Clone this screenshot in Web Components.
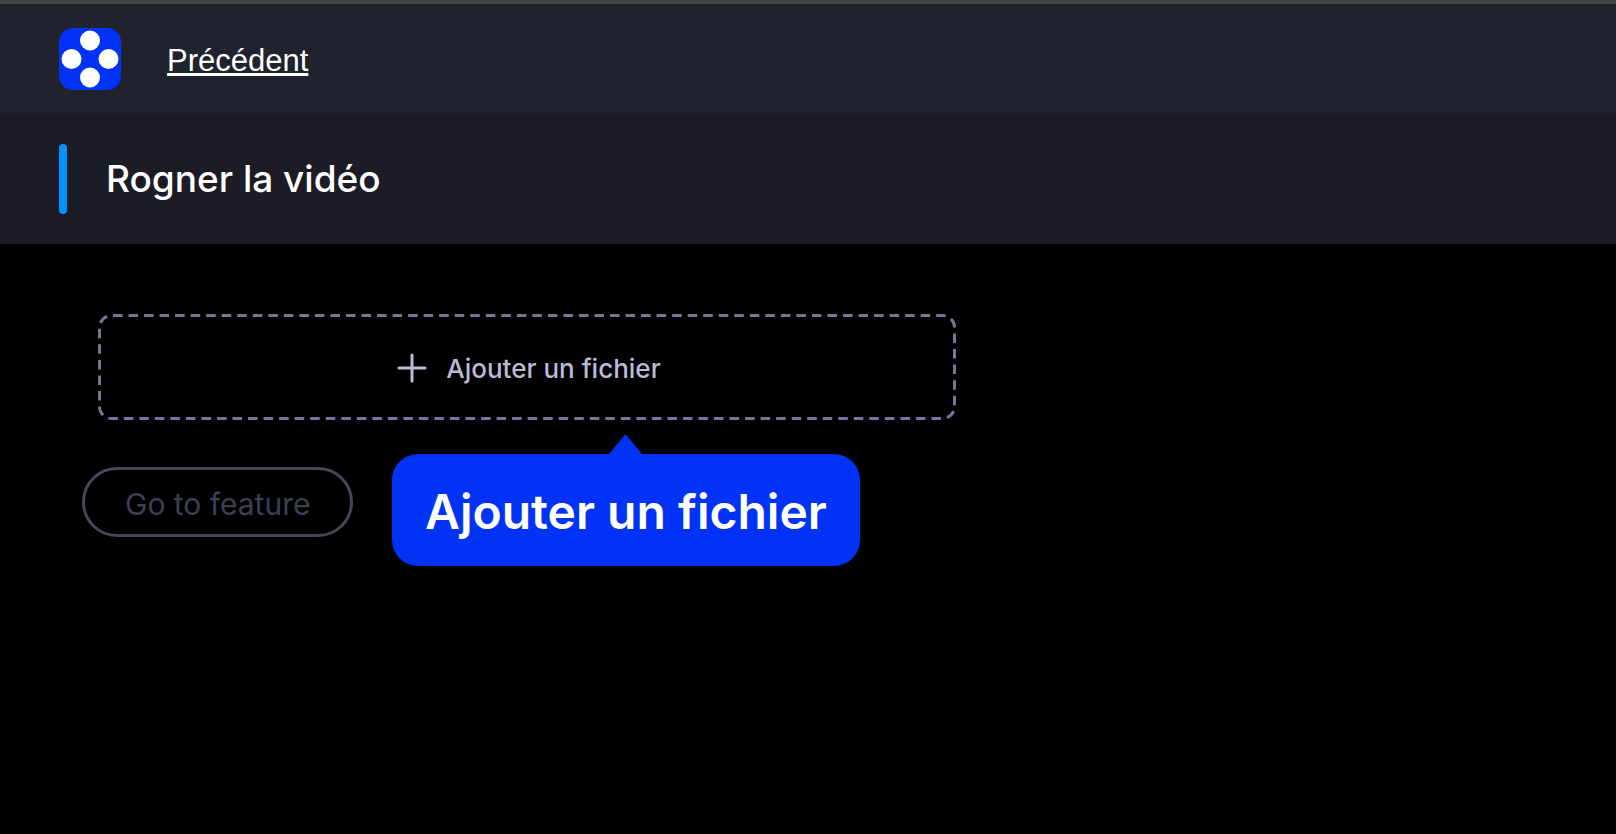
<!DOCTYPE html>
<html lang="fr">
<head>
<meta charset="utf-8">
<meta name="viewport" content="width=device-width, initial-scale=1">
<title>Rogner la vidéo</title>
<style>
  body { margin: 0; background: #000; font-family: Inter, "Open Sans", sans-serif; }
</style>
</head>
<body>
<crop-app></crop-app>

<script>
const define = (name, html) => {
  const template = document.createElement('template');
  template.innerHTML = html;
  customElements.define(name, class extends HTMLElement {
    constructor() {
      super();
      this.attachShadow({ mode: 'open' }).append(template.content.cloneNode(true));
    }
  });
};

define('app-logo', `
  <style>
    :host { display: block; width: 62px; height: 62px; }
    svg { display: block; }
  </style>
  <svg width="62" height="62" viewBox="0 0 62 62" aria-hidden="true">
    <rect width="62" height="62" rx="14" fill="#0033f5"/>
    <g fill="#fff">
      <circle cx="31" cy="12.5" r="10"/>
      <circle cx="12.5" cy="31" r="10"/>
      <circle cx="49.5" cy="31" r="10"/>
      <circle cx="31" cy="49.5" r="10"/>
    </g>
  </svg>`);

define('nav-bar', `
  <style>
    :host { display: flex; align-items: center; gap: 46px; padding: 24px 59px 23px;
            border-top: 4px solid #434643; background: #20222d; }
    a { padding-top: 4px; color: #fff; font: 31px/36px "Liberation Sans", Arial, sans-serif;
        text-decoration: underline; text-decoration-thickness: 3px; text-underline-offset: 2px; }
  </style>
  <app-logo></app-logo>
  <a href="#"><slot></slot></a>`);

define('page-title', `
  <style>
    :host { display: flex; align-items: center; gap: 39px; padding: 31px 59px 30px; background: #1b1c26; }
    .mark { width: 8px; height: 70px; border-radius: 4px; background: #0591ff; }
    h1 { margin: 0; color: #fff; font-size: 37px; line-height: 48px; font-weight: 500; }
  </style>
  <span class="mark"></span>
  <h1><slot></slot></h1>`);

define('file-drop', `
  <style>
    :host { display: block; position: relative; max-width: 858px; }
    button { position: relative; display: flex; align-items: center; justify-content: center; gap: 19px;
             width: 100%; height: 106px; padding: 2px 0 0 4px; border: 0; background: none;
             color: #bcbad8; font: inherit; font-size: 26px; line-height: 32px; font-weight: 500; cursor: pointer; }
    .outline { position: absolute; inset: 0; width: 100%; height: 100%; }
    .outline rect { width: calc(100% - 3px); height: calc(100% - 3px); fill: none; stroke: #77769a;
                    stroke-width: 3; stroke-dasharray: 9.5 6; stroke-dashoffset: -1.5; }
    span { padding-top: 2px; }
  </style>
  <button type="button">
    <svg class="outline" aria-hidden="true"><rect x="1.5" y="1.5" rx="12" pathLength="1891"/></svg>
    <svg width="30" height="30" viewBox="0 0 30 30" aria-hidden="true">
      <path d="M15 2V28M2 15H28" fill="none" stroke="#bcbad8" stroke-width="3" stroke-linecap="round"/>
    </svg>
    <span><slot></slot></span>
  </button>
  <slot name="hint"></slot>`);

define('hint-bubble', `
  <style>
    :host { position: absolute; top: calc(100% + 34px); left: 294px; box-sizing: border-box;
            padding: 30px 33px 26px; border-radius: 26px; background: #0033f5;
            color: #fff; font-size: 48px; line-height: 56px; font-weight: 600; white-space: nowrap; }
    svg { position: absolute; left: 217px; bottom: 100%; display: block; }
  </style>
  <svg width="33" height="20" viewBox="0 0 33 20" aria-hidden="true"><path d="M16.5 0L33 20H0Z" fill="#0033f5"/></svg>
  <slot></slot>`);

define('pill-button', `
  <style>
    :host { display: block; }
    button { box-sizing: border-box; height: 70px; padding: 4px 40px 0; border: 3px solid #45465a;
             border-radius: 35px; background: none; color: #3c4053;
             font: inherit; font-size: 30px; line-height: 36px; }
  </style>
  <button type="button" disabled><slot></slot></button>`);

define('crop-app', `
  <style>
    :host { display: block; }
    main { display: flex; flex-direction: column; align-items: flex-start; gap: 47px; padding: 70px 82px; }
    file-drop { align-self: stretch; margin-left: 16px; }
  </style>
  <header>
    <nav-bar>Précédent</nav-bar>
    <page-title>Rogner la vidéo</page-title>
  </header>
  <main>
    <file-drop>Ajouter un fichier<hint-bubble slot="hint" role="tooltip">Ajouter un fichier</hint-bubble></file-drop>
    <pill-button>Go to feature</pill-button>
  </main>`);
</script>
</body>
</html>
